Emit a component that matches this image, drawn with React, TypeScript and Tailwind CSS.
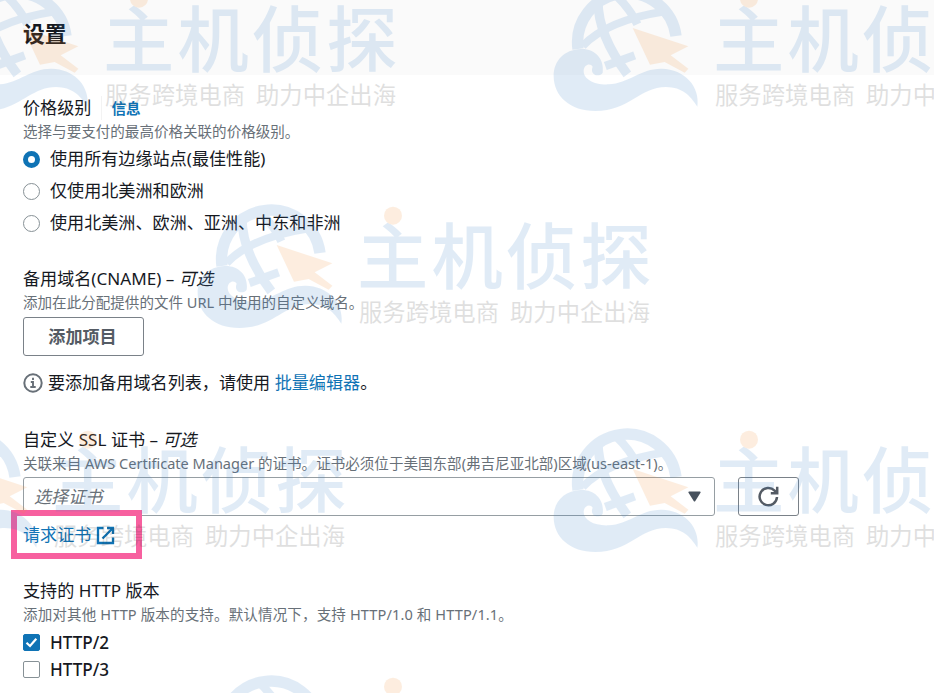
// CloudFront-style distribution settings form, with the site's
// tiled watermark laid over the whole page.

import { useState, type ReactNode } from "react";
import clsx from "clsx";

const TILES = [
  "left-[-60px] top-[-18px]",
  "left-[550px] top-[-18px]",
  "left-[194px] top-[198.5px]",
  "left-[-111px] top-[422.5px]",
  "left-[550px] top-[422.5px]",
  "left-[194px] top-[669.5px]",
];

function Watermark({ className }: { className: string }) {
  return (
    <svg
      className={clsx("absolute w-[460px] h-[133px] opacity-15", className)}
      viewBox="30 10 1380 399"
      fill="none"
    >
      {/* globe */}
      <g stroke="#3780ca">
        <path d="M114 211A148 148 0 1 1 408 172" strokeWidth="34" />
        <path d="M128 202Q200 125 375 98" strokeWidth="24" />
        <path d="M174 68Q174 170 262 287" strokeWidth="28" />
        <path d="M228 50Q270 90 292 137" strokeWidth="25" />
        <path d="M196 262L284 230" strokeWidth="25" />
      </g>
      <path
        d="M278 148L445 203L392 230L445 270L434 282L374 250L330 258Z"
        fill="#f28e30"
      />
      {/* wave */}
      <path
        d="M188 282C194 240 164 209 122 211C73 213 41 246 41 292C41 353 91 397 166 397C267 397 300 325 378 325C428 326 450 350 472 384C481 324 434 271 365 270C302 269 267 314 206 317C162 319 130 301 131 276C132 257 151 252 158 264C151 280 162 290 172 290C179 290 185 288 188 282Z"
        fill="#3780ca"
      />
      <text
        x="519"
        y="263"
        textLength="884"
        lengthAdjust="spacing"
        fill="#3780ca"
        className="font-['Noto_Sans_CJK_SC',sans-serif] text-[214px] font-medium"
      >
        主机侦探
      </text>
      <circle cx="627" cy="60" r="27" fill="#f28e30" />
      <text
        x="525"
        y="377"
        fill="#303030"
        className="font-['Noto_Sans_CJK_SC',sans-serif] text-[70px] font-normal"
      >
        服务跨境电商
      </text>
      <text
        x="978"
        y="377"
        fill="#303030"
        className="font-['Noto_Sans_CJK_SC',sans-serif] text-[70px] font-normal"
      >
        助力中企出海
      </text>
    </svg>
  );
}

function Label({ children }: { children: ReactNode }) {
  return (
    <div className="flex h-6 items-center whitespace-pre text-[17.1px]">
      {children}
    </div>
  );
}

function Hint({ children, className }: { children: ReactNode; className?: string }) {
  return (
    <p
      className={clsx(
        "flex h-[22px] items-center whitespace-pre pt-px text-[14.55px] text-[#687078]",
        className,
      )}
    >
      {children}
    </p>
  );
}

function Radio({
  label,
  checked,
  onSelect,
}: {
  label: string;
  checked: boolean;
  onSelect: () => void;
}) {
  return (
    <button
      role="radio"
      aria-checked={checked}
      onClick={onSelect}
      className="flex h-8 items-center gap-2.5 whitespace-nowrap"
    >
      <span
        className={clsx(
          "size-[17px] rounded-full bg-white",
          checked ? "border-[5.5px] border-[#0f73b5]" : "border border-[#879196]",
        )}
      />
      {label}
    </button>
  );
}

function Checkbox({
  label,
  checked,
  onToggle,
}: {
  label: string;
  checked: boolean;
  onToggle: () => void;
}) {
  return (
    <button
      role="checkbox"
      aria-checked={checked}
      onClick={onToggle}
      className="flex h-[27px] items-center gap-2.5 font-medium"
    >
      <span
        className={clsx(
          "flex size-[17px] items-center justify-center rounded-[2px] border",
          checked ? "border-[#0f73b5] bg-[#0f73b5]" : "border-[#879196] bg-white",
        )}
      >
        {checked && (
          <svg viewBox="0 0 17 17" className="size-[17px] shrink-0" fill="none">
            <path d="M3.5 8.8L7 12L13.3 4.8" stroke="#fff" strokeWidth="2.2" />
          </svg>
        )}
      </span>
      {label}
    </button>
  );
}

const PRICE_CLASSES = [
  "使用所有边缘站点(最佳性能)",
  "仅使用北美洲和欧洲",
  "使用北美洲、欧洲、亚洲、中东和非洲",
];

export default function App() {
  const [priceClass, setPriceClass] = useState(0);
  const [http2, setHttp2] = useState(true);
  const [http3, setHttp3] = useState(false);

  return (
    <div className="relative h-[693px] w-[934px] overflow-hidden bg-white font-['Noto_Sans','Noto_Sans_CJK_SC',sans-serif] text-[17.1px] text-[#16191f]">
      <header className="flex h-[75px] items-center bg-[#fafafa] pb-[6px] pl-[23px]">
        <h1 className="text-[21.8px] font-bold">设置</h1>
      </header>

      <main className="flex flex-col items-start pl-[23px] pt-[21px]">
        <Label>
          <span>价格级别</span>
          <span className="ml-2.5 h-6 w-px bg-[#f3f3f3]" />
          <a className="ml-[9px] pt-px text-[14.6px] font-bold text-[#0f73b5]">信息</a>
        </Label>
        <Hint>选择与要支付的最高价格关联的价格级别。</Hint>
        <div role="radiogroup" className="mt-px flex flex-col items-start">
          {PRICE_CLASSES.map((label, i) => (
            <Radio
              key={label}
              label={label}
              checked={i === priceClass}
              onSelect={() => setPriceClass(i)}
            />
          ))}
        </div>

        <section className="mt-7 flex flex-col items-start">
          <Label>
            备用域名(CNAME) – <i>可选</i>
          </Label>
          <Hint>添加在此分配提供的文件 URL 中使用的自定义域名。</Hint>
          <button className="mt-1 h-[39px] w-[121px] rounded-[3px] border border-[#7a8188] bg-white pr-0.5 font-bold text-[#545b64]">
            添加项目
          </button>
          <div className="mt-[15px] flex h-6 items-center whitespace-pre">
            <svg viewBox="0 0 20 20" className="mr-[5px] size-5" fill="none" stroke="#687078">
              <circle cx="10" cy="10" r="8.7" strokeWidth="2" />
              <path d="M10 4.8V7M7.8 9H10V14M7.3 14H12.7" strokeWidth="1.9" />
            </svg>
            要添加备用域名列表，请使用 <a className="text-[#0f73b5]">批量编辑器</a>。
          </div>
        </section>

        <section className="mt-[33px] flex flex-col items-start">
          <Label>
            自定义 SSL 证书 – <i>可选</i>
          </Label>
          <Hint>
            关联来自 AWS Certificate Manager 的证书。证书必须位于美国东部(弗吉尼亚北部)区域(us-east-1)。
          </Hint>
          <div className="mt-[3px] flex gap-[23px]">
            <button className="flex h-[39px] w-[692px] items-center justify-between rounded-[3px] border border-[#969ea3] bg-white pl-2.5 pr-[13px] italic text-[#687078]">
              选择证书
              <svg viewBox="0 0 13 11" className="h-[11px] w-[13px]">
                <path d="M1 .5H12Q13 .8 12.5 1.8L7.3 10Q6.5 11 5.7 10L.5 1.8Q0 .8 1 .5Z" fill="#48525e" />
              </svg>
            </button>
            <button
              aria-label="刷新"
              className="flex h-[39px] w-[61px] items-center justify-center rounded-[3px] border border-[#7a8188] bg-white"
            >
              <svg viewBox="0 0 21 21" className="size-[21px]" fill="none" stroke="#545b64" strokeWidth="2.5">
                <path d="M19 11A8.7 8.7 0 1 1 16.6 4.6L18.6 6.8" />
                <path d="M19.2 .8V7.3H12.8" />
              </svg>
            </button>
          </div>
          <a className="mt-[7px] flex h-6 items-center gap-[5px] text-[#0f73b5]">
            请求证书
            <svg viewBox="0 0 19 19" className="size-[19px]" fill="none" stroke="#0f73b5" strokeWidth="2.3">
              <path d="M7.5 2H2V17H17V11.5" />
              <path d="M11 2H17V8M17 2L6.5 12.5" />
            </svg>
          </a>
        </section>

        <section className="mt-8 flex flex-col items-start">
          <Label>支持的 HTTP 版本</Label>
          <Hint className="tracking-[0.12px]">
            添加对其他 HTTP 版本的支持。默认情况下，支持 HTTP/1.0 和 HTTP/1.1。
          </Hint>
          <div className="mt-1 flex flex-col items-start">
            <Checkbox label="HTTP/2" checked={http2} onToggle={() => setHttp2(!http2)} />
            <Checkbox label="HTTP/3" checked={http3} onToggle={() => setHttp3(!http3)} />
          </div>
        </section>
      </main>

      {/* callout around the certificate link */}
      <div className="pointer-events-none absolute left-[11px] top-[510px] h-[49px] w-[131px] border-[6px] border-[#f7609f]" />

      <div className="pointer-events-none absolute inset-0" aria-hidden>
        {TILES.map((pos) => (
          <Watermark key={pos} className={pos} />
        ))}
      </div>
    </div>
  );
}
